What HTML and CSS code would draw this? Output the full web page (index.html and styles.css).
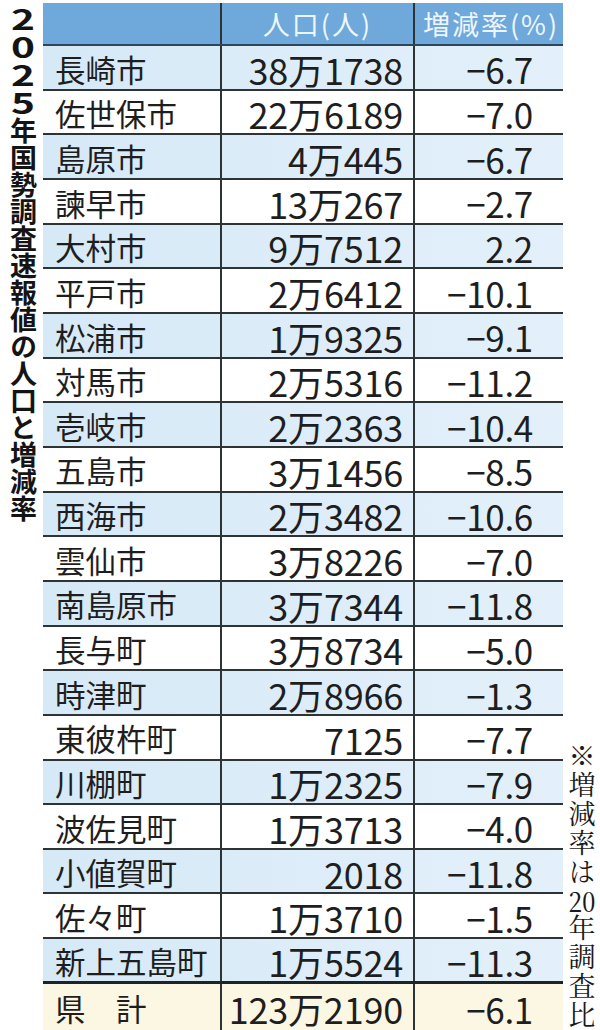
FILE: index.html
```html
<!DOCTYPE html>
<html lang="ja">
<head>
<meta charset="utf-8">
<title>2025年国勢調査速報値の人口と増減率</title>
<link rel="stylesheet" href="styles.css">
</head>
<body>
<div class="page">
  <div class="title"><span class="digits">2025</span>年国勢調査速報値の人口と増減率</div>
  <div class="table">
    <div class="row head">
      <div class="cell name"></div>
      <div class="cell pop">人口(人)</div>
      <div class="cell rate">増減率(%)</div>
    </div>
    <div class="row odd"><div class="cell name">長崎市</div><div class="cell pop">38万1738</div><div class="cell rate">−6.7</div></div>
    <div class="row"><div class="cell name">佐世保市</div><div class="cell pop">22万6189</div><div class="cell rate">−7.0</div></div>
    <div class="row odd"><div class="cell name">島原市</div><div class="cell pop">4万445</div><div class="cell rate">−6.7</div></div>
    <div class="row"><div class="cell name">諫早市</div><div class="cell pop">13万267</div><div class="cell rate">−2.7</div></div>
    <div class="row odd"><div class="cell name">大村市</div><div class="cell pop">9万7512</div><div class="cell rate">2.2</div></div>
    <div class="row"><div class="cell name">平戸市</div><div class="cell pop">2万6412</div><div class="cell rate">−10.1</div></div>
    <div class="row odd"><div class="cell name">松浦市</div><div class="cell pop">1万9325</div><div class="cell rate">−9.1</div></div>
    <div class="row"><div class="cell name">対馬市</div><div class="cell pop">2万5316</div><div class="cell rate">−11.2</div></div>
    <div class="row odd"><div class="cell name">壱岐市</div><div class="cell pop">2万2363</div><div class="cell rate">−10.4</div></div>
    <div class="row"><div class="cell name">五島市</div><div class="cell pop">3万1456</div><div class="cell rate">−8.5</div></div>
    <div class="row odd"><div class="cell name">西海市</div><div class="cell pop">2万3482</div><div class="cell rate">−10.6</div></div>
    <div class="row"><div class="cell name">雲仙市</div><div class="cell pop">3万8226</div><div class="cell rate">−7.0</div></div>
    <div class="row odd"><div class="cell name">南島原市</div><div class="cell pop">3万7344</div><div class="cell rate">−11.8</div></div>
    <div class="row"><div class="cell name">長与町</div><div class="cell pop">3万8734</div><div class="cell rate">−5.0</div></div>
    <div class="row odd"><div class="cell name">時津町</div><div class="cell pop">2万8966</div><div class="cell rate">−1.3</div></div>
    <div class="row"><div class="cell name">東彼杵町</div><div class="cell pop">7125</div><div class="cell rate">−7.7</div></div>
    <div class="row odd"><div class="cell name">川棚町</div><div class="cell pop">1万2325</div><div class="cell rate">−7.9</div></div>
    <div class="row"><div class="cell name">波佐見町</div><div class="cell pop">1万3713</div><div class="cell rate">−4.0</div></div>
    <div class="row odd"><div class="cell name">小値賀町</div><div class="cell pop">2018</div><div class="cell rate">−11.8</div></div>
    <div class="row"><div class="cell name">佐々町</div><div class="cell pop">1万3710</div><div class="cell rate">−1.5</div></div>
    <div class="row odd last"><div class="cell name">新上五島町</div><div class="cell pop">1万5524</div><div class="cell rate">−11.3</div></div>
    <div class="row total"><div class="cell name">県　計</div><div class="cell pop">123万2190</div><div class="cell rate">−6.1</div></div>
  </div>
  <div class="side">
    <div class="note">※増減率は<span class="tcy">20</span>年調査比</div>
  </div>
</div>
</body>
</html>
```

FILE: styles.css
```css
html, body {
  margin: 0;
  padding: 0;
  background: #ffffff;
}
body {
  font-family: "Noto Sans CJK JP", "Noto Sans", sans-serif;
  color: #1e1e1e;
}
.page {
  display: flex;
  width: 600px;
  height: 1030px;
  overflow: hidden;
}
.title {
  width: 43px;
  flex: none;
  writing-mode: vertical-rl;
  text-orientation: upright;
  font-size: 27px;
  font-weight: 700;
  line-height: 40px;
  padding-top: 5px;
  color: #141414;
}
.digits {
  display: inline-block;
  font-size: 28px;
  transform: scale(1.45, 1);
}
.table {
  width: 520px;
  flex: none;
  padding-top: 3px;
  display: flex;
  flex-direction: column;
}
.row {
  display: grid;
  grid-template-columns: 177px 193px 150px;
  height: 44.67px;
  box-sizing: border-box;
  border-bottom: 2px solid #2e3336;
  background: #ffffff;
}
.row.odd {
  background: linear-gradient(90deg, #d6e9f7 0%, #e3f0fa 100%);
}
.row.head {
  height: 43px;
  background: #6fa8da;
  color: #eef6fd;
  border-bottom: 2px solid #2f4658;
}
.row.last {
  border-bottom: 3px solid #1e2326;
}
.row.total {
  flex: 1;
  height: auto;
  border-bottom: none;
  background: #fcf7e3;
}
.cell {
  display: flex;
  align-items: center;
  font-size: 30.5px;
  line-height: 1;
  padding-top: 3px;
  box-sizing: border-box;
}
.cell.name {
  padding-left: 12px;
}
.cell.pop {
  justify-content: flex-end;
  padding-right: 10px;
  border-left: 2px solid #2e3336;
  font-size: 36px;
  letter-spacing: -0.2px;
}
.cell.rate {
  justify-content: flex-end;
  padding-right: 30px;
  border-left: 2px solid #2e3336;
  font-size: 35px;
  letter-spacing: -0.3px;
}
.head .cell {
  font-size: 27px;
  letter-spacing: 2px;
  padding-top: 0;
}
.head .cell.pop {
  justify-content: center;
  padding-right: 0;
}
.head .cell.rate {
  justify-content: center;
  padding-right: 0;
  padding-left: 4px;
}
.side {
  flex: 1;
  display: flex;
  flex-direction: column;
  justify-content: flex-end;
  align-items: center;
}
.note {
  writing-mode: vertical-rl;
  font-family: "Noto Serif CJK JP", "Noto Sans CJK JP", serif;
  font-size: 27px;
  line-height: 30px;
  letter-spacing: 2px;
  color: #1a1a1a;
}
.tcy {
  text-combine-upright: all;
}
```
